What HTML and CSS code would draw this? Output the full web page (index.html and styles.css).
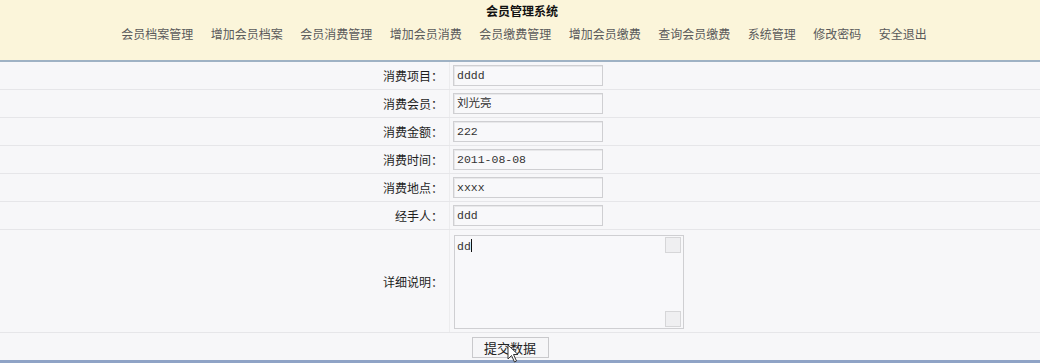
FILE: index.html
```html
<!DOCTYPE html>
<html lang="zh">
<head>
<meta charset="utf-8">
<title>会员管理系统</title>
<link rel="stylesheet" href="styles.css">
</head>
<body>
<header class="top">
  <div class="title">会员管理系统</div>
  <nav class="nav">
    <a>会员档案管理</a><a>增加会员档案</a><a>会员消费管理</a><a>增加会员消费</a><a>会员缴费管理</a><a>增加会员缴费</a><a>查询会员缴费</a><a>系统管理</a><a>修改密码</a><a>安全退出</a>
  </nav>
</header>
<main class="form">
  <div class="row"><div class="lab">消费项目：</div><div class="val"><div class="inp">dddd</div></div></div>
  <div class="row"><div class="lab">消费会员：</div><div class="val"><div class="inp">刘光亮</div></div></div>
  <div class="row"><div class="lab">消费金额：</div><div class="val"><div class="inp">222</div></div></div>
  <div class="row"><div class="lab">消费时间：</div><div class="val"><div class="inp">2011-08-08</div></div></div>
  <div class="row"><div class="lab">消费地点：</div><div class="val"><div class="inp">xxxx</div></div></div>
  <div class="row"><div class="lab">经手人：</div><div class="val"><div class="inp">ddd</div></div></div>
  <div class="row tall"><div class="lab">详细说明：</div><div class="val"><div class="area"><div class="area-text">dd<span class="caret"></span></div><div class="sbar"><span class="sq"></span><span class="sq"></span></div></div></div></div>
  <div class="row btnrow"><div class="btn-wrap"><span class="btn">提交数据</span><svg class="cursor" width="14" height="20" viewBox="0 0 14 20"><path d="M1 1 L1 15 L4.5 11.5 L7.5 18 L9.5 17 L6.5 10.5 L11 10.5 Z" fill="#fff" stroke="#333" stroke-width="1"/></svg></div></div>
</main>
</body>
</html>
```
FILE: styles.css
```css
* { box-sizing: border-box; }
html, body { margin: 0; padding: 0; }
body {
  background: #f7f7f9;
  font-family: "Noto Sans CJK SC", "Liberation Sans", sans-serif;
  font-size: 12px;
  color: #333;
  width: 1040px;
  height: 363px;
  overflow: hidden;
}
.top {
  height: 62px;
  background: #fbf5da;
  border-bottom: 2px solid #9fb2c4;
  display: flex;
  flex-direction: column;
  align-items: center;
}
.title {
  margin-top: 2px;
  margin-left: 4px;
  font-weight: bold;
  font-size: 12px;
  line-height: 18px;
  color: #111;
}
.nav {
  margin-top: 5px;
  margin-left: 8px;
  display: flex;
  gap: 17.5px;
  line-height: 18px;
}
.nav a {
  color: #5a5a5a;
  font-size: 12px;
}
.form { display: flex; flex-direction: column; }
.row {
  display: grid;
  grid-template-columns: 450px 1fr;
  height: 28px;
  border-bottom: 1px solid #e6e6e9;
}
.row.tall { height: 103px; }
.lab {
  text-align: right;
  padding-right: 6px;
  border-right: 1px solid #ececee;
  display: flex;
  align-items: center;
  justify-content: flex-end;
  color: #1e1e1e;
  font-size: 12px;
}
.val {
  display: flex;
  align-items: center;
  padding-left: 3px;
}
.inp {
  width: 150px;
  height: 21px;
  border: 1px solid #cfcfd2;
  box-shadow: inset 1px 1px 0 #e8e8ea;
  background: #f8f8fa;
  font-family: "Liberation Mono", "DejaVu Sans Mono", "Noto Sans CJK SC", monospace;
  font-size: 11.5px;
  color: #333;
  padding: 0 3px;
  line-height: 19px;
}
.area {
  width: 230px;
  height: 94px;
  border: 1px solid #cfcfd2;
  background: #f8f8fa;
  display: flex;
  margin-top: 1px;
  margin-left: 1px;
}
.area-text {
  flex: 1;
  padding: 3px 2px;
  font-family: "Liberation Mono", "DejaVu Sans Mono", monospace;
  font-size: 11.5px;
  line-height: 14px;
  color: #333;
}
.caret {
  display: inline-block;
  width: 1px;
  height: 13px;
  background: #111;
  vertical-align: -2px;
}
.sbar {
  width: 18px;
  display: flex;
  flex-direction: column;
  justify-content: space-between;
  padding: 1px 1px 1px 0;
}
.sq {
  width: 16px;
  height: 16px;
  border: 1px solid #d6d6d8;
  background: #efeff1;
}
.btnrow {
  display: flex;
  justify-content: center;
  align-items: center;
  border-bottom: 3px solid #8fa3c6;
  height: 30px;
}
.btn-wrap { position: relative; margin-right: 20px; margin-top: 1px; }
.btn {
  display: inline-block;
  width: 77px;
  height: 21px;
  border: 1px solid #c9c9cc;
  background: #f6f6f8;
  text-align: center;
  font-size: 13px;
  line-height: 19px;
  color: #222;
}
.cursor {
  position: absolute;
  left: 35px;
  top: 7px;
}
```
